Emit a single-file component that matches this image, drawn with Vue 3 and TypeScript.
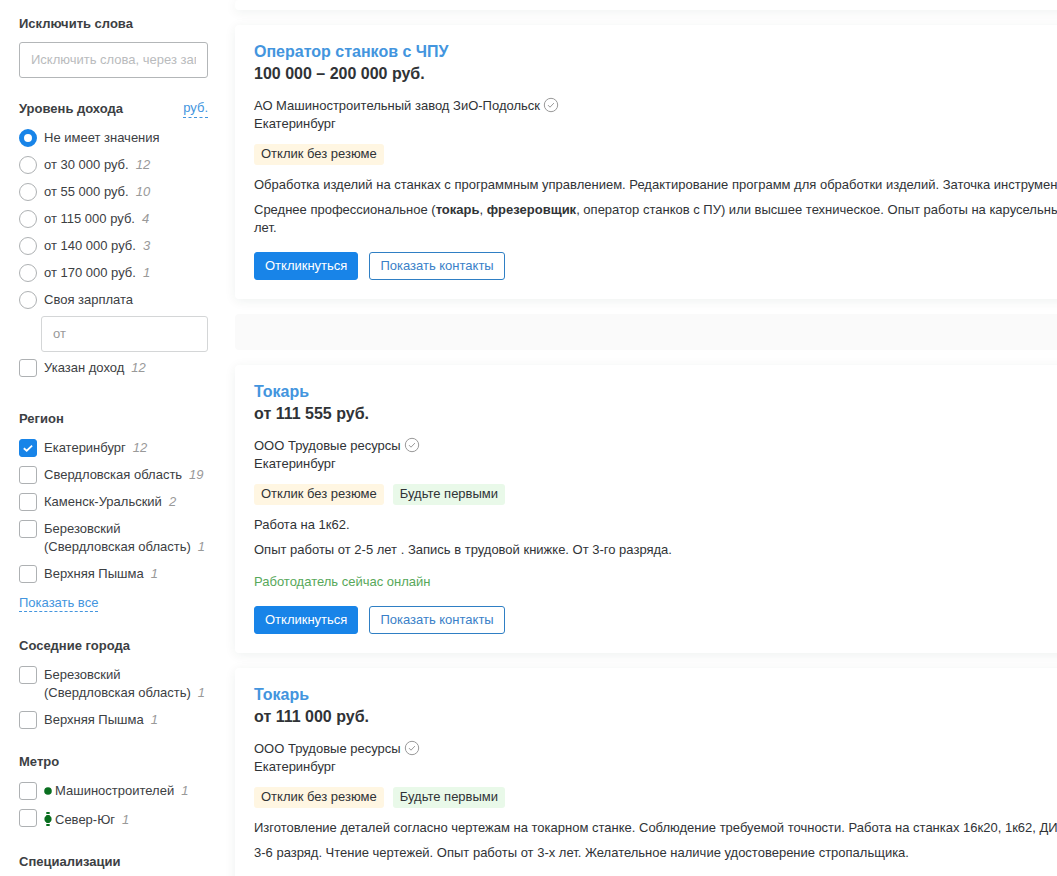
<script setup lang="ts">
import { ref } from 'vue'

interface Option {
  label: string
  count?: number
  metro?: 'station' | 'line'
}

interface TextPart {
  text: string
  strong?: boolean
}

interface Vacancy {
  title: string
  salary: string
  company: string
  city: string
  first?: boolean
  online?: boolean
  texts: TextPart[][]
}

const incomes: Option[] = [
  { label: 'Не имеет значения' },
  { label: 'от 30 000 руб.', count: 12 },
  { label: 'от 55 000 руб.', count: 10 },
  { label: 'от 115 000 руб.', count: 4 },
  { label: 'от 140 000 руб.', count: 3 },
  { label: 'от 170 000 руб.', count: 1 },
  { label: 'Своя зарплата' },
]

const regions: Option[] = [
  { label: 'Екатеринбург', count: 12 },
  { label: 'Свердловская область', count: 19 },
  { label: 'Каменск-Уральский', count: 2 },
  { label: 'Березовский (Свердловская область)', count: 1 },
  { label: 'Верхняя Пышма', count: 1 },
]

const neighbours: Option[] = [
  { label: 'Березовский (Свердловская область)', count: 1 },
  { label: 'Верхняя Пышма', count: 1 },
]

const metro: Option[] = [
  { label: 'Машиностроителей', count: 1, metro: 'station' },
  { label: 'Север-Юг', count: 1, metro: 'line' },
]

const vacancies: Vacancy[] = [
  {
    title: 'Оператор станков с ЧПУ',
    salary: '100\u00a0000 – 200\u00a0000 руб.',
    company: 'АО Машиностроительный завод ЗиО-Подольск',
    city: 'Екатеринбург',
    texts: [
      [{ text: 'Обработка изделий на станках с программным управлением. Редактирование программ для обработки изделий. Заточка инструмента.' }],
      [
        { text: 'Среднее профессиональное (' },
        { text: 'токарь', strong: true },
        { text: ', ' },
        { text: 'фрезеровщик', strong: true },
        { text: ', оператор станков с ПУ) или высшее техническое. Опыт работы на карусельных станках от 3 лет.' },
      ],
    ],
  },
  {
    title: 'Токарь',
    salary: 'от 111\u00a0555 руб.',
    company: 'ООО Трудовые ресурсы',
    city: 'Екатеринбург',
    first: true,
    online: true,
    texts: [
      [{ text: 'Работа на 1к62.' }],
      [{ text: 'Опыт работы от 2-5 лет . Запись в трудовой книжке. От 3-го разряда.' }],
    ],
  },
  {
    title: 'Токарь',
    salary: 'от 111\u00a0000 руб.',
    company: 'ООО Трудовые ресурсы',
    city: 'Екатеринбург',
    first: true,
    texts: [
      [{ text: 'Изготовление деталей согласно чертежам на токарном станке. Соблюдение требуемой точности. Работа на станках 16к20, 1к62, ДИП...' }],
      [{ text: '3-6 разряд. Чтение чертежей. Опыт работы от 3-х лет. Желательное наличие удостоверение стропальщика.' }],
    ],
  },
]

const income = ref(0)
const excluded = ref('')
const ownSalary = ref('')
const chosenRegions = ref<string[]>(['Екатеринбург'])
const chosenNeighbours = ref<string[]>([])
const chosenMetro = ref<string[]>([])
const onlyWithIncome = ref(false)
</script>

<template>
  <div class="page">
    <aside class="filters">
      <section class="group group-words">
        <label class="heading" for="exclude">Исключить слова</label>
        <input id="exclude" v-model="excluded" class="field" type="text" placeholder="Исключить слова, через запятую">
      </section>

      <section class="group group-income">
        <div class="heading-row">
          <h3 id="income-title" class="heading">Уровень дохода</h3>
          <a href="#" class="dashed">руб.</a>
        </div>
        <div class="options" role="radiogroup" aria-labelledby="income-title">
          <label v-for="(item, i) in incomes" :key="item.label" class="option">
            <input v-model="income" type="radio" name="income" :value="i" class="mark radio">
            <span>{{ item.label }}<i v-if="item.count" class="count">{{ item.count }}</i></span>
          </label>
        </div>
        <input v-model="ownSalary" class="field field-own" type="text" placeholder="от" aria-label="Своя зарплата, от">
        <label class="option">
          <input v-model="onlyWithIncome" type="checkbox" class="mark box">
          <span>Указан доход<i class="count">12</i></span>
        </label>
      </section>

      <section class="group group-region">
        <h3 class="heading">Регион</h3>
        <div class="options">
          <label v-for="item in regions" :key="item.label" class="option">
            <input v-model="chosenRegions" type="checkbox" :value="item.label" class="mark box">
            <span>{{ item.label }}<i class="count">{{ item.count }}</i></span>
          </label>
        </div>
        <a href="#" class="dashed show-all">Показать все</a>
      </section>

      <section class="group">
        <h3 class="heading">Соседние города</h3>
        <div class="options">
          <label v-for="item in neighbours" :key="item.label" class="option">
            <input v-model="chosenNeighbours" type="checkbox" :value="item.label" class="mark box">
            <span>{{ item.label }}<i class="count">{{ item.count }}</i></span>
          </label>
        </div>
      </section>

      <section class="group">
        <h3 class="heading">Метро</h3>
        <div class="options">
          <label v-for="item in metro" :key="item.label" class="option">
            <input v-model="chosenMetro" type="checkbox" :value="item.label" class="mark box">
            <span class="metro" :class="item.metro">
              <svg v-if="item.metro === 'station'" width="8" height="16" viewBox="0 0 8 16" aria-hidden="true">
                <circle cx="4" cy="8" r="3.800" fill="#0a6f20" />
              </svg>
              <svg v-else width="8" height="16" viewBox="0 0 8 16" aria-hidden="true">
                <path d="M2.300 1h3.400v2H2.300zM2.300 13h3.400v2H2.300zM2.300 4h3.400v8H2.300z" fill="#0a6f20" />
                <circle cx="4" cy="8" r="3.600" fill="#0a6f20" />
              </svg>
              <span>{{ item.label }}<i class="count">{{ item.count }}</i></span>
            </span>
          </label>
        </div>
      </section>

      <section class="group">
        <h3 class="heading">Специализации</h3>
      </section>
    </aside>

    <main class="results">
      <div class="card card-previous"></div>
      <template v-for="(job, i) in vacancies" :key="i">
        <article class="card">
          <h2 class="title"><a href="#">{{ job.title }}</a></h2>
          <p class="salary">{{ job.salary }}</p>
          <p class="company">
            <span>{{ job.company }}</span>
            <svg width="16" height="16" viewBox="0 0 16 16" fill="none" stroke="#999" aria-hidden="true">
              <circle cx="8" cy="8" r="6.700" />
              <path d="M5 8.100l2 2.100 3.900-4.100" />
            </svg>
          </p>
          <p class="city">{{ job.city }}</p>
          <div class="badges">
            <span class="badge badge-cream">Отклик без резюме</span>
            <span v-if="job.first" class="badge badge-green">Будьте первыми</span>
          </div>
          <p v-for="(parts, n) in job.texts" :key="n" class="text">
            <template v-for="(part, k) in parts" :key="k"><b v-if="part.strong">{{ part.text }}</b><template v-else>{{ part.text }}</template></template>
          </p>
          <p v-if="job.online" class="online">Работодатель сейчас онлайн</p>
          <div class="actions">
            <button type="button" class="button button-main">Откликнуться</button>
            <button type="button" class="button button-outline">Показать контакты</button>
          </div>
        </article>
        <div v-if="i === 0" class="banner"></div>
      </template>
    </main>
  </div>
</template>

<style>
body {
  margin: 0;
  background: #fff;
  overflow-x: hidden;
}
</style>

<style scoped>
.page {
  display: flex;
  gap: 27px;
  padding-left: 19px;
  overflow: hidden;
  height: 100vh;
  box-sizing: border-box;
  font: 13px/18px "Liberation Sans", Arial, sans-serif;
  color: #303336;
}

h2, h3, p {
  margin: 0;
  font-size: inherit;
}

a {
  color: #4395de;
  text-decoration: none;
}

.filters {
  flex: 0 0 189px;
  padding-top: 15px;
  color: #3c4043;
}

.group {
  margin-bottom: 24px;
}

.group-words {
  margin-bottom: 22px;
}

.group-income {
  margin-bottom: 33px;
}

.group-region {
  margin-bottom: 25px;
}

.heading {
  display: block;
  font-weight: bold;
  margin-bottom: 11px;
}

.heading-row {
  display: flex;
  justify-content: space-between;
  margin-bottom: 11px;
}

.heading-row .heading {
  margin: 0;
}

.group-words .heading {
  margin-bottom: 9px;
}

.dashed {
  line-height: 16px;
  border-bottom: 1px dashed #4395de;
}

.show-all {
  display: inline-block;
  margin-top: 12px;
}

.field {
  display: block;
  box-sizing: border-box;
  width: 100%;
  height: 36px;
  padding: 0 11px 1px;
  border: 1px solid #b3b6b8;
  border-radius: 3px;
  background: #fff;
  font: inherit;
  color: inherit;
}

.field::placeholder {
  color: #b9bbbd;
}

.field-own {
  width: calc(100% - 22px);
  margin: 7px 0 7px 22px;
  border-color: #d4d6d7;
}

.field-own::placeholder {
  color: #999;
}

.options {
  display: grid;
  gap: 9px;
}

.option {
  display: flex;
  gap: 7px;
  align-items: flex-start;
}

.mark {
  appearance: none;
  flex: none;
  box-sizing: border-box;
  width: 18px;
  height: 18px;
  margin: 0;
  border: 1px solid #aeb1b3;
  background: #fff;
}

.radio {
  border-radius: 50%;
}

.radio:checked {
  border: 5px solid #1884e8;
}

.box {
  border-radius: 3px;
}

.box:checked {
  border-color: #1884e8;
  background: #1884e8 url("data:image/svg+xml,%3Csvg xmlns='http://www.w3.org/2000/svg' viewBox='0 0 16 16'%3E%3Cpath d='M3.800 8.200l2.900 2.500 5.400-5' fill='none' stroke='white' stroke-width='1.800'/%3E%3C/svg%3E") center / 16px 16px;
}

.count {
  margin-left: 7px;
  color: #999;
}

.metro {
  display: flex;
  gap: 3px;
}

.metro svg {
  margin-top: 1px;
}

.metro.line {
  margin-top: 2px;
}

.metro.line svg {
  margin-top: 0;
}

.results {
  flex: 1 0 932px;
}

.card {
  padding: 16px 20px 19px 19px;
  margin-bottom: 15px;
  border-radius: 4px;
  background: #fff;
  box-shadow: 0 2px 12px rgba(20, 50, 40, 0.07);
}

.card-previous {
  padding: 5px;
}

.title,
.salary {
  font-size: 16px;
  font-weight: bold;
  line-height: 22px;
}

.company {
  display: flex;
  gap: 3px;
  margin-top: 12px;
}

.badges {
  display: flex;
  gap: 9px;
  margin: 11px 0;
}

.badge {
  padding: 0 7px 2px;
  border-radius: 3px;
  line-height: 19px;
}

.badge-cream {
  background: #fff6e2;
}

.badge-green {
  background: #e9f9e9;
}

.text + .text {
  margin-top: 7px;
}

.online {
  margin-top: 14px;
  color: #57a85a;
}

.actions {
  display: flex;
  gap: 11px;
  margin-top: 15px;
}

.button {
  height: 28px;
  padding: 0 10px;
  border: 1px solid #1884e8;
  border-radius: 3px;
  font: inherit;
}

.button-main {
  background: #1884e8;
  color: #fff;
}

.button-outline {
  border-color: #2f7fc4;
  background: #fff;
  color: #3a7fc8;
}

.banner {
  height: 36px;
  margin-bottom: 15px;
  border-radius: 4px;
  background: #fafafa;
}
</style>
